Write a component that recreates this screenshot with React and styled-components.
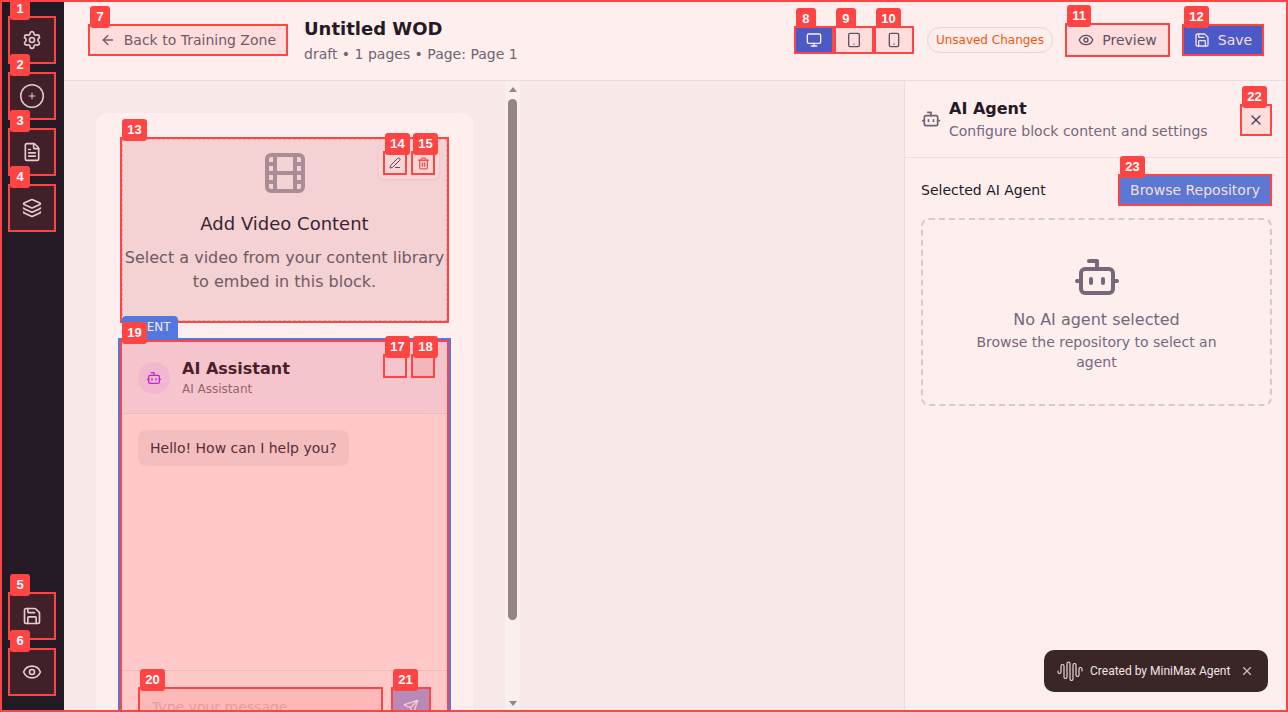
import React from "react";
import styled, { createGlobalStyle } from "styled-components";
import { Settings, FileText, Layers, Save, Eye, ArrowLeft, Monitor, Tablet, Smartphone, PenLine, Trash2, Film, Bot, Send, X } from "lucide-react";

const RED = "#ff4444";
const Global = createGlobalStyle`
  html, body { margin: 0; padding: 0; height: 100%; overflow: hidden; }
  body { font-family: "DejaVu Sans", sans-serif; background: #ffeeee; color: #231a26; }
  #root { height: 100%; }
  * { box-sizing: border-box; }
  button { font-family: inherit; }
`;

const Page = styled.div`
  position: relative;
  display: flex;
  height: 712px;
  overflow: hidden;
`;
const Frame = styled.div`
  position: absolute;
  inset: 0;
  border: 2px solid ${RED};
  pointer-events: none;
  z-index: 50;
`;
const Badge = styled.span`
  position: absolute;
  left: 0;
  top: -20px;
  min-width: 20px;
  height: 22px;
  padding: 0 5.3px;
  background: ${RED};
  border-radius: 3px;
  color: #fff;
  font: 700 13px/22px "Liberation Sans", sans-serif;
  text-align: center;
  z-index: ${(p) => (p.$under ? -1 : 40)};
`;
const Sidebar = styled.nav`
  width: 64px;
  flex: none;
  background: #241a26;
  display: flex;
  flex-direction: column;
  align-items: center;
  padding: 16px 0;
  gap: 8px;
`;
const Spacer = styled.div`
  flex: 1;
`;
const SideBtn = styled.button`
  position: relative;
  width: 48px;
  height: 48px;
  padding: 0;
  display: flex;
  align-items: center;
  justify-content: center;
  background: #42202a;
  border: 2px solid ${RED};
  color: #e5cdcd;
`;
const Main = styled.div`
  flex: 1;
  min-width: 0;
  display: flex;
  flex-direction: column;
`;
const Header = styled.header`
  height: 81px;
  flex: none;
  display: flex;
  align-items: center;
  padding: 0 24px;
  background: #ffeeee;
  border-bottom: 1px solid #eadcdf;
`;
const BackBtn = styled.button`
  position: relative;
  height: 32px;
  width: 200px;
  display: flex;
  align-items: center;
  gap: 8px;
  padding: 0 10px;
  background: #ffdddd;
  border: 2px solid ${RED};
  color: #6f5a64;
  font-size: 14px;
  white-space: nowrap;
`;
const TitleBox = styled.div`
  margin-left: 16px;
  display: flex;
  flex-direction: column;
  gap: 3px;
`;
const Title = styled.h1`
  margin: 0;
  font-size: 18px;
  line-height: 24px;
  font-weight: 700;
  color: #231a26;
`;
const Meta = styled.div`
  font-size: 14px;
  line-height: 20px;
  color: #6f6470;
`;
const Right = styled.div`
  margin-left: auto;
  display: flex;
  align-items: center;
`;
const DeviceGroup = styled.div`
  display: flex;
  isolation: isolate;
  margin-right: 13px;
`;
const DeviceBtn = styled.button`
  position: relative;
  width: 40px;
  height: 28px;
  padding: 0;
  display: flex;
  align-items: center;
  justify-content: center;
  border: 2px solid ${RED};
  background: ${(p) => (p.$active ? "#4b5ac6" : "#ffdddd")};
  color: ${(p) => (p.$active ? "#ffeeee" : "#5e5160")};
`;
const Pill = styled.div`
  height: 26px;
  padding: 0 8px;
  display: flex;
  align-items: center;
  border: 1px solid #e3d4d6;
  border-radius: 13px;
  color: #ea580c;
  font-size: 12px;
  white-space: nowrap;
  margin-right: 12px;
`;
const PreviewBtn = styled.button`
  position: relative;
  width: 105px;
  height: 34px;
  display: flex;
  align-items: center;
  justify-content: center;
  gap: 8px;
  padding: 0;
  background: #ffdddd;
  border: 2px solid ${RED};
  color: #5e5160;
  font-size: 14px;
  margin-right: 12px;
`;
const SaveBtn = styled.button`
  position: relative;
  width: 82px;
  height: 32px;
  display: flex;
  align-items: center;
  justify-content: center;
  gap: 8px;
  padding: 0;
  background: #4b5ac6;
  border: 2px solid ${RED};
  color: #f5dfe6;
  font-size: 14px;
`;
const Body = styled.div`
  flex: 1;
  min-height: 0;
  display: flex;
`;
const Canvas = styled.section`
  flex: 1;
  min-width: 0;
  display: flex;
  background: #f8e8e8;
  overflow: hidden;
`;
const Scroller = styled.div`
  width: 441px;
  flex: none;
  padding: 32px 32px 0;
  overflow: hidden;
  height: 631px;
`;
const Card = styled.div`
  background: #ffeeee;
  border-radius: 12px;
  padding: 24px;
  display: flex;
  flex-direction: column;
  gap: 15px;
`;
const VideoBlock = styled.div`
  position: relative;
  height: 186px;
  background: #f4d1d3;
  border: 2px solid ${RED};
  outline: 1px dashed #c8b6b8;
  outline-offset: -3px;
  display: flex;
  flex-direction: column;
  align-items: center;
  padding-top: 10px;
  color: #aa8c96;
`;
const VideoTitle = styled.h3`
  margin: 13px 0 0;
  font-size: 18px;
  line-height: 28px;
  font-weight: 400;
  color: #3a2530;
`;
const VideoText = styled.p`
  margin: 8px 0 0;
  font-size: 16px;
  line-height: 24px;
  text-align: center;
  color: #6f5a64;
  white-space: nowrap;
`;
const Actions = styled.div`
  position: absolute;
  top: 8px;
  right: 8px;
  display: flex;
  gap: 4px;
  padding: 4px;
  border-radius: 6px;
  background: ${(p) => (p.$plain ? "transparent" : "#fbd6d6")};
  box-shadow: ${(p) => (p.$plain ? "none" : "0 1px 3px rgba(200, 120, 120, 0.2)")};
`;
const ActionBtn = styled.button`
  position: relative;
  width: 24px;
  height: 24px;
  padding: 0;
  display: flex;
  align-items: center;
  justify-content: center;
  background: ${(p) => p.$tone || "transparent"};
  border: 2px solid ${RED};
  color: ${(p) => p.$color || "#5e4450"};
`;
const AgentWrap = styled.div`
  position: relative;
  margin: 0 -2px;
  border: 2px solid #5278e0;
`;
const AgentTag = styled.div`
  position: absolute;
  left: 2px;
  top: -24px;
  width: 56px;
  height: 22px;
  background: #5278e0;
  border-radius: 4px 4px 0 0;
  color: #f5e6ee;
  font-size: 12px;
  line-height: 22px;
  text-align: center;
`;
const Chat = styled.div`
  position: relative;
  background: #ffc9c9;
  border: 2px solid ${RED};
  display: flex;
  flex-direction: column;
`;
const ChatHead = styled.div`
  height: 72px;
  flex: none;
  display: flex;
  align-items: center;
  gap: 12px;
  padding: 0 16px;
  background: #f6c4cc;
  border-bottom: 1px solid #eeb8bf;
`;
const Avatar = styled.div`
  width: 32px;
  height: 32px;
  border-radius: 50%;
  background: #f3b7cf;
  display: flex;
  align-items: center;
  justify-content: center;
  color: #c026d3;
`;
const ChatNames = styled.div`
  padding-bottom: 2px;
`;
const ChatName = styled.div`
  font-size: 16px;
  line-height: 24px;
  font-weight: 700;
  color: #4a1f2c;
`;
const ChatSub = styled.div`
  font-size: 12px;
  line-height: 16px;
  color: #98646f;
`;
const ChatBody = styled.div`
  height: 256px;
  flex: none;
  padding: 16px;
`;
const Bubble = styled.div`
  display: inline-block;
  padding: 8px 12px;
  border-radius: 8px;
  background: #f4bebe;
  font-size: 14px;
  line-height: 20px;
  color: #572c38;
`;
const ChatFoot = styled.div`
  height: 80px;
  flex: none;
  border-top: 1px solid #eebabc;
  display: flex;
  gap: 8px;
  padding: 16px 16px 0;
`;
const Input = styled.div`
  position: relative;
  flex: 1;
  height: 40px;
  padding: 0 12px;
  background: #ffb8b8;
  border: 2px solid ${RED};
  color: #e39ca0;
  font-size: 14px;
  line-height: 36px;
`;
const SendBtn = styled.button`
  position: relative;
  width: 40px;
  height: 40px;
  padding: 0;
  display: flex;
  align-items: center;
  justify-content: center;
  background: #b78ab8;
  border: 2px solid ${RED};
  color: #f8c8d8;
`;
const Scrollbar = styled.div`
  width: 15px;
  flex: none;
  margin-right: auto;
  background: #fbeeee;
  display: flex;
  flex-direction: column;
  align-items: center;
  padding: 6px 0;
`;
const ArrowUp = styled.div`
  border-left: 4px solid transparent;
  border-right: 4px solid transparent;
  border-bottom: 5px solid #968585;
`;
const ArrowDown = styled.div`
  border-left: 4px solid transparent;
  border-right: 4px solid transparent;
  border-top: 5px solid #968585;
  margin-top: auto;
`;
const Thumb = styled.div`
  width: 9px;
  height: 521px;
  margin-top: 7px;
  border-radius: 5px;
  background: #968585;
`;
const Panel = styled.aside`
  width: 384px;
  flex: none;
  background: #ffeeee;
  border-left: 1px solid #eadcdf;
  position: relative;
`;
const PanelHead = styled.div`
  height: 77px;
  display: flex;
  align-items: center;
  padding: 0 16px;
  border-bottom: 1px solid #eadcdf;
  color: #6f6470;
`;
const PanelTitles = styled.div`
  margin-left: 8px;
  flex: 1;
`;
const PanelTitle = styled.div`
  font-size: 16px;
  line-height: 24px;
  font-weight: 700;
  color: #231a26;
`;
const PanelSub = styled.div`
  font-size: 14px;
  line-height: 20px;
  color: #75687a;
`;
const CloseBtn = styled.button`
  position: relative;
  width: 32px;
  height: 32px;
  margin-top: 2px;
  padding: 0;
  display: flex;
  align-items: center;
  justify-content: center;
  background: #ffdddd;
  border: 2px solid ${RED};
  color: #4f4350;
`;
const PanelBody = styled.div`
  padding: 16px;
`;
const FieldRow = styled.div`
  display: flex;
  align-items: center;
  justify-content: space-between;
  margin-bottom: 12px;
`;
const FieldLabel = styled.span`
  font-size: 14px;
  color: #231a26;
`;
const BrowseBtn = styled.button`
  position: relative;
  width: 154px;
  height: 32px;
  padding: 0;
  background: #5c78d2;
  border: 2px solid ${RED};
  color: #f5dfe6;
  font-size: 14px;
`;
const Empty = styled.div`
  height: 188px;
  border: 2px dashed #dcc8cc;
  border-radius: 8px;
  display: flex;
  flex-direction: column;
  align-items: center;
  padding: 33px 48px 0;
  color: #75687a;
`;
const EmptyTitle = styled.div`
  margin-top: 7px;
  font-size: 16px;
  line-height: 24px;
  color: #75687a;
`;
const EmptySub = styled.div`
  font-size: 14px;
  line-height: 20px;
  text-align: center;
  color: #75687a;
`;
const Toast = styled.div`
  position: absolute;
  right: 20px;
  bottom: 20px;
  width: 224px;
  height: 42px;
  border-radius: 10px;
  background: #3a2627;
  color: #f3e4e4;
  display: flex;
  align-items: center;
  padding: 0 14px 0 13px;
  font: 12px Roboto, sans-serif;
  white-space: nowrap;
`;
const ToastText = styled.span`
  margin-left: 7px;
  flex: 1;
`;
const ToastClose = styled.span`
  display: flex;
  color: #cdbcbc;
`;

const CirclePlusIcon = () => (
  <svg width="24" height="24" viewBox="0 0 24 24" fill="none" stroke="currentColor" strokeLinecap="round">
    <circle cx="12" cy="12" r="11.25" strokeWidth="1.5" />
    <path d="M12 9v6M9 12h6" strokeWidth="1" />
  </svg>
);
const WaveIcon = () => (
  <svg width="26" height="22" viewBox="0 0 26 22" fill="none" stroke="currentColor" strokeWidth="1.1" strokeLinecap="round">
    <path d="M1 11v1a1.5 1.5 0 0 0 3 0V6a1.5 1.5 0 0 1 3 0V17a1.5 1.5 0 0 0 3 0V3.5a1.5 1.5 0 0 1 3 0V19a1.5 1.5 0 0 0 3 0V5a1.5 1.5 0 0 1 3 0V15a1.5 1.5 0 0 0 3 0V9a1.5 1.5 0 0 1 3 0v2" />
  </svg>
);

export default function App() {
  return (
    <Page>
      <Global />
      <Sidebar>
        <SideBtn><Badge>1</Badge><Settings size={20} strokeWidth={2} /></SideBtn>
        <SideBtn><Badge>2</Badge><CirclePlusIcon /></SideBtn>
        <SideBtn><Badge>3</Badge><FileText size={20} strokeWidth={2} /></SideBtn>
        <SideBtn><Badge>4</Badge><Layers size={20} strokeWidth={2} /></SideBtn>
        <Spacer />
        <SideBtn><Badge>5</Badge><Save size={20} strokeWidth={2} /></SideBtn>
        <SideBtn><Badge>6</Badge><Eye size={20} strokeWidth={2} /></SideBtn>
      </Sidebar>
      <Main>
        <Header>
          <BackBtn><Badge>7</Badge><ArrowLeft size={16} />Back to Training Zone</BackBtn>
          <TitleBox>
            <Title>Untitled WOD</Title>
            <Meta>draft • 1 pages • Page: Page 1</Meta>
          </TitleBox>
          <Right>
            <DeviceGroup>
              <DeviceBtn $active><Badge $under>8</Badge><Monitor size={16} /></DeviceBtn>
              <DeviceBtn><Badge $under>9</Badge><Tablet size={16} /></DeviceBtn>
              <DeviceBtn><Badge $under>10</Badge><Smartphone size={16} /></DeviceBtn>
            </DeviceGroup>
            <Pill>Unsaved Changes</Pill>
            <PreviewBtn><Badge>11</Badge><Eye size={16} />Preview</PreviewBtn>
            <SaveBtn><Badge>12</Badge><Save size={16} />Save</SaveBtn>
          </Right>
        </Header>
        <Body>
          <Canvas>
            <Scroller>
              <Card>
                <VideoBlock>
                  <Badge>13</Badge>
                  <Film size={48} strokeWidth={2} />
                  <VideoTitle>Add Video Content</VideoTitle>
                  <VideoText>Select a video from your content library<br />to embed in this block.</VideoText>
                  <Actions>
                    <ActionBtn><Badge>14</Badge><PenLine size={12} /></ActionBtn>
                    <ActionBtn $color="#ef5555"><Badge>15</Badge><Trash2 size={13} strokeWidth={2.5} /></ActionBtn>
                  </Actions>
                </VideoBlock>
                <AgentWrap>
                  <AgentTag>AGENT</AgentTag>
                  <Chat>
                    <Badge>19</Badge>
                    <ChatHead>
                      <Avatar><Bot size={16} /></Avatar>
                      <ChatNames>
                        <ChatName>AI Assistant</ChatName>
                        <ChatSub>AI Assistant</ChatSub>
                      </ChatNames>
                    </ChatHead>
                    <Actions $plain>
                      <ActionBtn><Badge>17</Badge></ActionBtn>
                      <ActionBtn $tone="#f4b4bb"><Badge>18</Badge></ActionBtn>
                    </Actions>
                    <ChatBody><Bubble>Hello! How can I help you?</Bubble></ChatBody>
                    <ChatFoot>
                      <Input><Badge>20</Badge>Type your message...</Input>
                      <SendBtn><Badge>21</Badge><Send size={16} /></SendBtn>
                    </ChatFoot>
                  </Chat>
                </AgentWrap>
              </Card>
            </Scroller>
            <Scrollbar>
              <ArrowUp />
              <Thumb />
              <ArrowDown />
            </Scrollbar>
          </Canvas>
          <Panel>
            <PanelHead>
              <Bot size={20} />
              <PanelTitles>
                <PanelTitle>AI Agent</PanelTitle>
                <PanelSub>Configure block content and settings</PanelSub>
              </PanelTitles>
              <CloseBtn><Badge>22</Badge><X size={16} /></CloseBtn>
            </PanelHead>
            <PanelBody>
              <FieldRow>
                <FieldLabel>Selected AI Agent</FieldLabel>
                <BrowseBtn><Badge>23</Badge>Browse Repository</BrowseBtn>
              </FieldRow>
              <Empty>
                <Bot size={48} />
                <EmptyTitle>No AI agent selected</EmptyTitle>
                <EmptySub>Browse the repository to select an agent</EmptySub>
              </Empty>
            </PanelBody>
            <Toast><WaveIcon /><ToastText>Created by MiniMax Agent</ToastText><ToastClose><X size={14} /></ToastClose></Toast>
          </Panel>
        </Body>
      </Main>
      <Frame />
    </Page>
  );
}
